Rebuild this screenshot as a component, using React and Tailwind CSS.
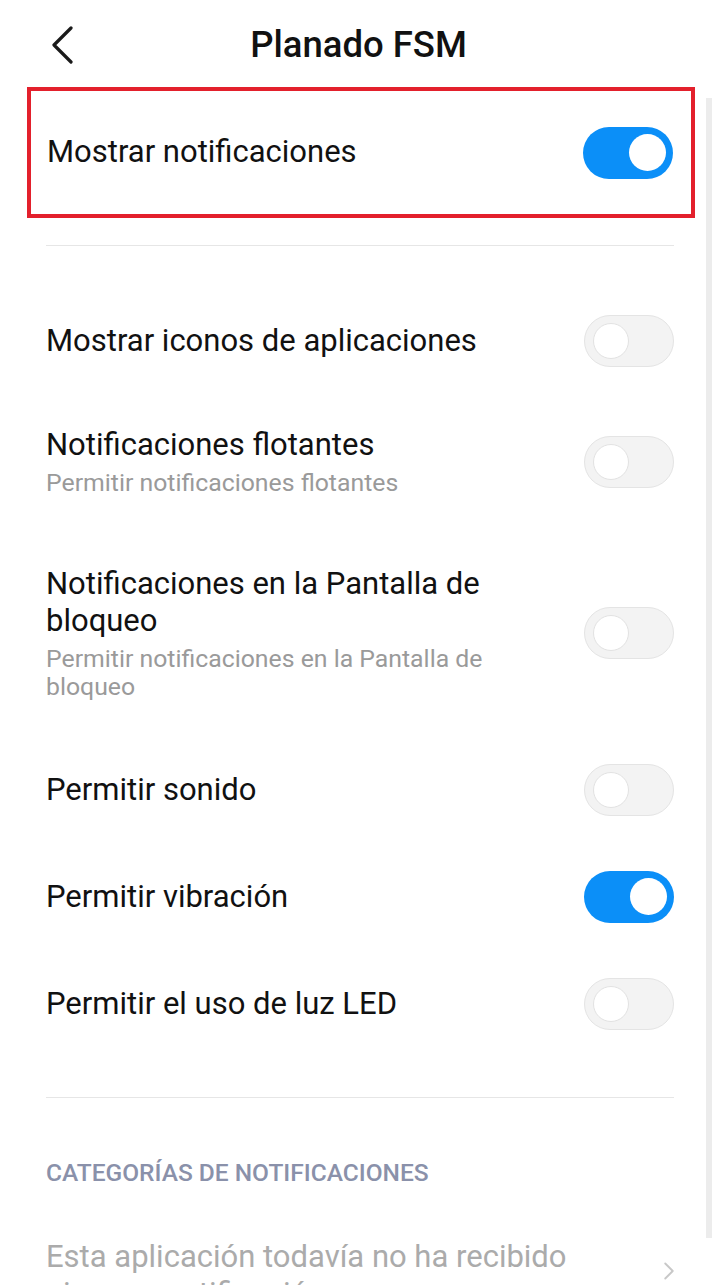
import { ChevronRight } from 'lucide-react';

const rows = [
  { title: 'Mostrar iconos de aplicaciones', on: false, h: 'h-[107px]' },
  { title: 'Notificaciones flotantes', sub: 'Permitir notificaciones flotantes', on: false, h: 'h-[135px]' },
  {
    title: 'Notificaciones en la Pantalla de bloqueo',
    sub: 'Permitir notificaciones en la Pantalla de bloqueo',
    on: false,
    h: 'h-[207px]',
  },
  { title: 'Permitir sonido', on: false, h: 'h-[107px]' },
  { title: 'Permitir vibración', on: true, h: 'h-[107px]' },
  { title: 'Permitir el uso de luz LED', on: false, h: 'h-[107px]' },
];

function Toggle({ on }) {
  return on ? (
    <div className="flex h-[52px] w-[90px] shrink-0 items-center justify-end rounded-full bg-[#0b8ff8] pr-[7px]">
      <div className="h-[37px] w-[37px] rounded-full bg-white" />
    </div>
  ) : (
    <div className="flex h-[52px] w-[90px] shrink-0 items-center rounded-full border border-[#e4e4e4] bg-[#f3f3f3] pl-[8px]">
      <div className="h-[36px] w-[36px] rounded-full border border-[#e2e2e2] bg-white" />
    </div>
  );
}

function Row({ title, sub, on, h }) {
  return (
    <div className={`flex ${h} items-center justify-between`}>
      <div className="max-w-[500px]">
        <p className="text-[31px] leading-[37px] text-[#111]">{title}</p>
        {sub && <p className="mt-[6px] text-[24.8px] leading-[28px] text-[#9a9a9a]">{sub}</p>}
      </div>
      <Toggle on={on} />
    </div>
  );
}

export default function App() {
  return (
    <div
      className="relative h-[1285px] w-[717px] overflow-hidden bg-white"
      style={{ fontFamily: 'Roboto, "Noto Sans", sans-serif' }}
    >
      <div className="absolute right-[5px] top-[98px] h-[1140px] w-[6px] bg-[#ececec]" />

      <header className="relative flex h-[87px] items-center justify-center">
        <svg className="absolute left-[50px] top-[26px]" width="26" height="38" viewBox="0 0 26 38" fill="none">
          <path d="M21 2 L4 19 L21 36" stroke="#1a1a1a" strokeWidth="3.2" strokeLinecap="round" strokeLinejoin="round" />
        </svg>
        <h1 className="mt-[4px] text-[36.5px] font-medium text-[#111]">Planado FSM</h1>
      </header>

      <div className="ml-[27px] mr-[22px] flex h-[131px] items-center justify-between border-4 border-[#e3202c] pl-[16px] pr-[18px]">
        <span className="text-[31px] text-[#111]">Mostrar notificaciones</span>
        <Toggle on />
      </div>

      <div className="ml-[46px] mr-[43px]">
        <div className="mt-[27px] border-t border-[#e6e6e6]" />
        <div className="mt-[41px]">
          {rows.map((r) => (
            <Row key={r.title} {...r} />
          ))}
        </div>
        <div className="mt-[40px] border-t border-[#e6e6e6]" />
        <p className="mt-[57px] text-[24.5px] font-medium uppercase text-[#8a91aa]">Categorías de notificaciones</p>
        <div className="mt-[46px] flex items-start justify-between">
          <p className="max-w-[560px] text-[31px] leading-[37px] text-[#ababab]">
            Esta aplicación todavía no ha recibido ninguna notificación
          </p>
          <ChevronRight className="-mr-[10px] mt-[18px] text-[#c8c8c8]" size={30} strokeWidth={1.5} />
        </div>
      </div>
    </div>
  );
}
